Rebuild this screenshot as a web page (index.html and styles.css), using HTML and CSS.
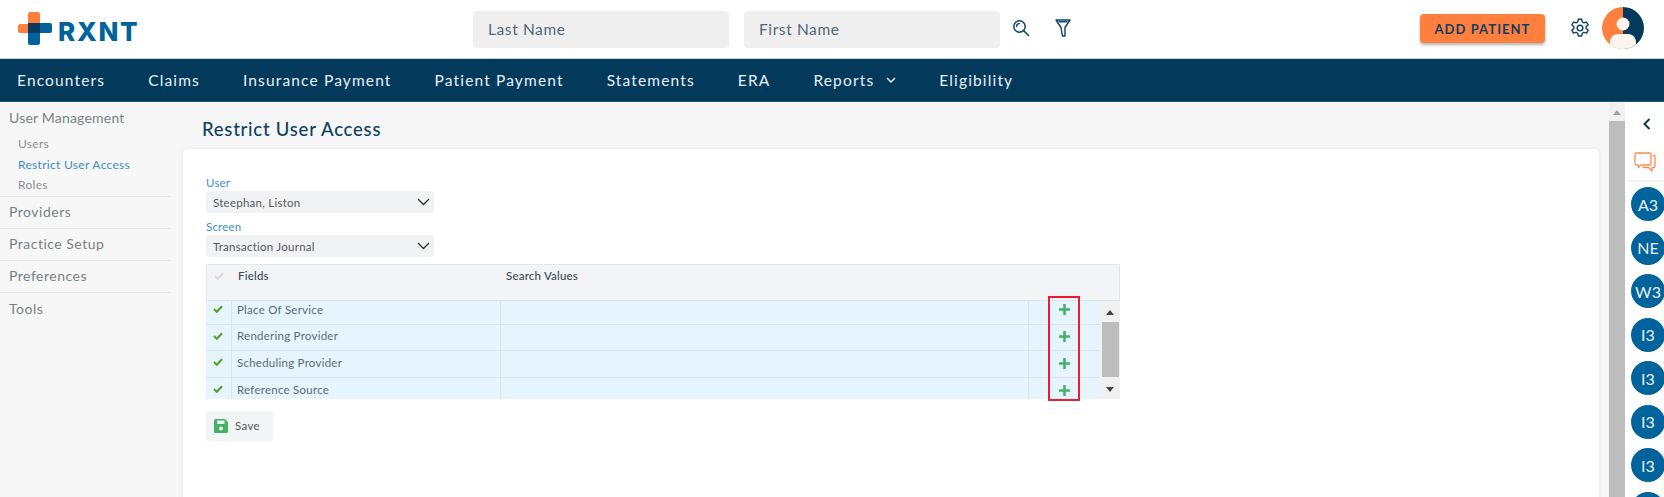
FILE: index.html
```html
<!DOCTYPE html>
<html lang="en">
<head>
<meta charset="utf-8">
<title>Restrict User Access</title>
<link rel="stylesheet" href="styles.css">
</head>
<body>
<header class="top">
  <div class="logo">
    <svg class="logo-mark" width="34" height="33" viewBox="0 0 34 33">
      <path fill="#ff7f3f" d="M10 2a2 2 0 0 1 2-2h8a2 2 0 0 1 2 2v19H2a2 2 0 0 1-2-2v-5a2 2 0 0 1 2-2h8z"/>
      <path fill="#00639c" d="M10 11h22a2 2 0 0 1 2 2v6a2 2 0 0 1-2 2H22v10a2 2 0 0 1-2 2h-8a2 2 0 0 1-2-2z"/>
      <rect x="10" y="11" width="12" height="10" fill="#0b3a5e"/>
    </svg>
    <span class="logo-text">RXNT</span>
  </div>
  <div class="search">
    <div class="field">Last Name</div>
    <div class="field">First Name</div>
    <svg class="search-icon" width="18" height="18" viewBox="0 0 18 18" fill="none" stroke="#0a4468" stroke-width="1.5"><circle cx="7.5" cy="7.5" r="5.7"/><path d="M11.6 11.6 16.500 16.500M4.600 7.200a3 3 0 0 1 2.600-2.600" stroke-linecap="round"/></svg>
    <svg class="filter-icon" width="16" height="18" viewBox="0 0 16 18" fill="none" stroke="#0a4468" stroke-width="1.4" stroke-linejoin="round"><path d="M1 1h14L10 8.500V17H7.500L6 8.500z"/><path d="M3.500 2.800h9"/></svg>
  </div>
  <div class="top-right">
    <button class="add">ADD PATIENT</button>
    <svg class="gear" width="20" height="22" viewBox="0 0 24 24" fill="none" stroke="#0a4468" stroke-width="1.7" stroke-linejoin="round"><circle cx="12" cy="12" r="3.400"/><path d="M10 1.500h4l.7 3.200 2 1.100 3.100-1 2 3.400-2.400 2.200v2.200l2.400 2.200-2 3.400-3.100-1-2 1.100-.7 3.200h-4l-.7-3.200-2-1.100-3.100 1-2-3.400 2.400-2.200v-2.200L2.200 8.200l2-3.400 3.100 1 2-1.100z"/></svg>
    <div class="avatar">
      <svg width="42" height="42" viewBox="0 0 42 42">
        <defs><clipPath id="av"><circle cx="21" cy="21" r="21"/></clipPath></defs>
        <g clip-path="url(#av)">
          <rect width="21" height="42" fill="#ff7f3f"/>
          <rect x="21" width="21" height="42" fill="#033a5c"/>
          <circle cx="21" cy="17" r="6.500" fill="#fbf4ef"/>
          <rect x="8" y="27" width="26" height="20" rx="8" fill="#fbf4ef"/>
        </g>
      </svg>
    </div>
  </div>
</header>
<nav class="nav">
  <a class="nav-item first">Encounters</a>
  <a class="nav-item">Claims</a>
  <a class="nav-item">Insurance Payment</a>
  <a class="nav-item">Patient Payment</a>
  <a class="nav-item">Statements</a>
  <a class="nav-item">ERA</a>
  <a class="nav-item">Reports<svg class="caret" width="10" height="7" viewBox="0 0 10 7" fill="none" stroke="#e8f0f5" stroke-width="1.500"><path d="M1 1l4 4 4-4"/></svg></a>
  <a class="nav-item">Eligibility</a>
</nav>
<div class="body">
  <aside class="side">
    <div class="side-group open">
      <div class="side-head">User Management</div>
      <div class="side-link">Users</div>
      <div class="side-link active">Restrict User Access</div>
      <div class="side-link">Roles</div>
    </div>
    <div class="side-group"><div class="side-head">Providers</div></div>
    <div class="side-group"><div class="side-head">Practice Setup</div></div>
    <div class="side-group"><div class="side-head">Preferences</div></div>
    <div class="side-group last"><div class="side-head">Tools</div></div>
  </aside>
  <main class="main">
    <h1 class="title">Restrict User Access</h1>
    <section class="card">
      <label class="lab">User</label>
      <div class="select"><span>Steephan, Liston</span><svg width="13" height="8" viewBox="0 0 13 8" fill="none" stroke="#333" stroke-width="1.300"><path d="M1 1l5.500 5.500L12 1"/></svg></div>
      <label class="lab second">Screen</label>
      <div class="select"><span>Transaction Journal</span><svg width="13" height="8" viewBox="0 0 13 8" fill="none" stroke="#333" stroke-width="1.300"><path d="M1 1l5.500 5.500L12 1"/></svg></div>
      <div class="grid">
        <div class="grid-head">
          <div class="c-check"><svg class="tick" width="10" height="8" viewBox="0 0 12 10" fill="none" stroke="#d3dbde" stroke-width="2.600"><path d="M1 5l3.500 3.500L11 1.500"/></svg></div>
          <div class="c-field strong">Fields</div>
          <div class="c-search strong">Search Values</div>
        </div>
        <div class="grid-body">
          <div class="rows">
            <div class="row r1">
              <div class="c-check"><svg class="tick" width="10" height="8" viewBox="0 0 12 10" fill="none" stroke="#5c9e2e" stroke-width="2.600"><path d="M1 5l3.500 3.500L11 1.500"/></svg></div>
              <div class="c-field">Place Of Service</div><div class="c-search"></div>
              <div class="c-plus"><svg class="plus" width="11" height="11" viewBox="0 0 12 12"><path fill="#46b067" d="M4.600 0h2.800v4.600H12v2.800H7.400V12H4.600V7.400H0V4.600h4.600z"/></svg></div>
            </div>
            <div class="row r2">
              <div class="c-check"><svg class="tick" width="10" height="8" viewBox="0 0 12 10" fill="none" stroke="#5c9e2e" stroke-width="2.600"><path d="M1 5l3.500 3.500L11 1.500"/></svg></div>
              <div class="c-field">Rendering Provider</div><div class="c-search"></div>
              <div class="c-plus"><svg class="plus" width="11" height="11" viewBox="0 0 12 12"><path fill="#46b067" d="M4.600 0h2.800v4.600H12v2.800H7.400V12H4.600V7.400H0V4.600h4.600z"/></svg></div>
            </div>
            <div class="row r3">
              <div class="c-check"><svg class="tick" width="10" height="8" viewBox="0 0 12 10" fill="none" stroke="#5c9e2e" stroke-width="2.600"><path d="M1 5l3.500 3.500L11 1.500"/></svg></div>
              <div class="c-field">Scheduling Provider</div><div class="c-search"></div>
              <div class="c-plus"><svg class="plus" width="11" height="11" viewBox="0 0 12 12"><path fill="#46b067" d="M4.600 0h2.800v4.600H12v2.800H7.400V12H4.600V7.400H0V4.600h4.600z"/></svg></div>
            </div>
            <div class="row r4">
              <div class="c-check"><svg class="tick" width="10" height="8" viewBox="0 0 12 10" fill="none" stroke="#5c9e2e" stroke-width="2.600"><path d="M1 5l3.500 3.500L11 1.500"/></svg></div>
              <div class="c-field">Reference Source</div><div class="c-search"></div>
              <div class="c-plus"><svg class="plus" width="11" height="11" viewBox="0 0 12 12"><path fill="#46b067" d="M4.600 0h2.800v4.600H12v2.800H7.400V12H4.600V7.400H0V4.600h4.600z"/></svg></div>
            </div>
          </div>
          <div class="mini-scroll">
            <span class="arr up"></span>
            <span class="mini-thumb"></span>
            <span class="arr down"></span>
          </div>
          <div class="redbox"></div>
        </div>
      </div>
      <button class="save">
        <svg width="14" height="14" viewBox="0 0 14 14"><path fill="#46b067" d="M1.500 0H11l3 3v9.500a1.500 1.500 0 0 1-1.500 1.500h-11A1.500 1.500 0 0 1 0 12.500v-11A1.500 1.500 0 0 1 1.500 0z"/><rect x="3" y="1.500" width="7.500" height="3.500" fill="#e8f5ec"/><circle cx="7" cy="9.500" r="2" fill="#e8f5ec"/></svg>
        Save
      </button>
    </section>
  </main>
  <div class="scroll">
    <span class="scroll-up"></span>
    <span class="scroll-thumb"></span>
  </div>
  <aside class="rail">
    <svg class="rail-back" width="8" height="12" viewBox="0 0 8 12" fill="none" stroke="#123f3c" stroke-width="2"><path d="M6.500 1 1.500 6l5 5"/></svg>
    <svg class="rail-chat" width="22" height="20" viewBox="0 0 22 20" fill="none" stroke="#ff8a50" stroke-width="1.300" stroke-linejoin="round"><path d="M2.500 1h13A1.500 1.500 0 0 1 17 2.500v9a1.500 1.500 0 0 1-1.500 1.500H7l-2.500 2.500V13h-2A1.500 1.500 0 0 1 1 11.500v-9A1.500 1.500 0 0 1 2.500 1z"/><path d="M18.500 3.500H20a1 1 0 0 1 1 1V14a1.500 1.500 0 0 1-1.500 1.500H18V19l-3.500-3.500H8.500"/></svg>
    <div class="rail-list">
      <div class="bubble">A3</div>
      <div class="bubble">NE</div>
      <div class="bubble">W3</div>
      <div class="bubble">I3</div>
      <div class="bubble">I3</div>
      <div class="bubble">I3</div>
      <div class="bubble">I3</div>
      <div class="bubble"></div>
    </div>
  </aside>
</div>
</body>
</html>
```
FILE: styles.css
```css
* { box-sizing: border-box; }
html, body { margin: 0; height: 100%; }
body {
  width: 1664px;
  height: 497px;
  overflow: hidden;
  font-family: "Lato", "Open Sans", sans-serif;
  background: #fff;
  display: flex;
  flex-direction: column;
}
.top {
  height: 59px;
  flex: none;
  display: flex;
  align-items: center;
  position: relative;
  border-bottom: 1px solid #c9d3da;
}
.logo { display: flex; align-items: center; width: 473px; padding-left: 18px; gap: 6px; }
.logo-mark { margin-top: -1px; }
.logo-text { font-family: "Inter", sans-serif; font-weight: 800; font-size: 26px; color: #00639c; line-height: 1; margin-top: 6px; letter-spacing: 1.700px; }
.search { display: flex; align-items: center; }
.field {
  width: 256px; height: 37px; margin-right: 15px;
  background: #efefef; border-radius: 4px;
  padding-left: 15px; line-height: 37px;
  font-size: 15.500px; letter-spacing: .6px; color: #54677a;
}
.search-icon { margin-left: -3px; margin-top: -3px; }
.filter-icon { margin-left: 25px; margin-top: -3px; }
.top-right { margin-left: auto; display: flex; align-items: center; padding-right: 20px; }
.add {
  width: 125px; height: 29px; border: 0; border-radius: 4px;
  background: #ff7f3f; color: #123f63;
  font: 700 13px "Lato", sans-serif; letter-spacing: 1.050px;
  box-shadow: 0 2px 3px rgba(0,0,0,.3);
  margin-right: 25px; margin-top: -1px;
}
.gear { margin-right: 12px; margin-top: -3px; }
.avatar { width: 42px; height: 42px; margin-top: -3px; }
.avatar svg { display: block; }
.nav {
  height: 43px; flex: none;
  background: #033a5c;
  display: flex; align-items: center;
  padding-left: 17px; gap: 43px;
  border-bottom: 1px solid #1f5a78;
}
.nav-item { color: #e8f0f5; font-size: 15.500px; letter-spacing: 1.150px; display: flex; align-items: center; }
.caret { margin-left: 12px; }
.body { flex: 1; display: flex; min-height: 0; }
.side {
  width: 183px; flex: none; background: #f7f7f7;
  padding-right: 13px;
}
.side-group { border-bottom: 1px solid #e6e6e6; height: 32px; padding-left: 9px; }
.side-group.open { height: 95px; }
.side-group.last { border: 0; }
.side-head { font-size: 14px; letter-spacing: .5px; color: #7a7f84; line-height: 30px; }
.last .side-head { line-height: 32px; }
.open .side-head { line-height: 20px; padding-top: 6px; height: 32px; letter-spacing: .2px; }
.side-link { font-size: 12px; letter-spacing: .3px; color: #8b8f93; line-height: 20.700px; padding-left: 9px; }
.side-link.active { color: #3d8ec9; }
.main { flex: 1; min-width: 0; background: #f7f7f7; padding-right: 10px; }
.title { margin: 0; padding: 17px 0 0 19px; height: 47px; font-size: 18.500px; line-height: 20px; font-weight: 500; color: #0e3f60; letter-spacing: .75px; }
.card {
  background: #fff; border-radius: 4px 4px 0 0;
  box-shadow: 0 0 4px rgba(0,0,0,.08);
  height: 360px; padding: 26px 0 0 23px;
}
.lab { display: block; font-size: 11.500px; line-height: 16px; color: #3d8ec9; letter-spacing: .2px; }
.lab.second { margin-top: 6px; }
.select {
  width: 228px; height: 22px; background: #f1f2f4; border-radius: 4px;
  display: flex; align-items: center; justify-content: space-between;
  padding: 0 4px 0 7px; font-size: 11.500px; color: #54595e; letter-spacing: .25px;
}
.grid { width: 914px; margin-top: 7px; }
.grid-head {
  height: 37px; background: #f2f4f5;
  border: 1px solid #e4e8ea; border-bottom: 1px solid #dde3e6;
  display: flex; font-size: 11.500px; color: #445; letter-spacing: .2px;
}
.grid-head .c-check { width: 26px; padding: 7px 2px 0 0; }
.grid-head .c-field { width: 269px; padding: 4px 0 0 5px; line-height: 14px; color: #3a4a55; font-weight: 500; }
.grid-head .c-search { padding: 4px 0 0 4px; line-height: 14px; color: #3a4a55; font-weight: 500; }
.grid-head .tick { display: block; }
.grid-body { display: flex; position: relative; }
.rows { width: 894px; height: 98px; overflow: hidden; }
.row { display: flex; background: #e5f4fd; border-bottom: 1px solid #d9e4ec; height: 27px; font-size: 11.500px; color: #5e6a75; letter-spacing: .25px; }
.row.r1 { height: 24px; }
.row.r2 { height: 26px; }
.row.r4 { border-bottom: 0; }
.row > div { border-right: 1px solid #d9e4ec; height: 100%; }
.c-check { width: 26px; flex: none; display: flex; justify-content: center; padding: 4px 1px 0 0; }
.row .c-field { width: 269px; flex: none; padding: 5px 0 0 5px; line-height: 14px; }
.row .c-search { width: 528px; flex: none; }
.row .c-plus { flex: 1; border-right: 0; display: flex; justify-content: center; padding: 7px 0 0 0; }
.row.r1 .c-field { padding-top: 2px; }
.row.r1 .c-plus { padding-top: 3px; }
.row.r2 .c-field { padding-top: 4px; }
.row.r2 .c-plus { padding-top: 6px; }
.row.r2 .c-check, .row.r3 .c-check, .row.r4 .c-check { padding-top: 7px; }
.row .tick { display: block; }
.mini-scroll { flex: 1; background: #f1f1f1; display: flex; flex-direction: column; align-items: center; justify-content: space-between; padding: 9px 0 7px; position: relative; height: 98px; }
.mini-thumb { position: absolute; top: 21px; left: 2px; right: 1px; height: 55px; background: #bdbdbd; }
.arr { width: 0; height: 0; border: 4.500px solid transparent; }
.arr.up { border-bottom: 5px solid #444; border-top: 0; }
.arr.down { border-top: 5px solid #444; border-bottom: 0; }
.redbox { position: absolute; left: 842px; top: -5px; width: 32px; height: 105px; border: 2px solid #ea1c2d; }
.save {
  margin-top: 12px; width: 67px; height: 29px; border: 0; border-radius: 3px;
  background: #f2f5f6; box-shadow: 0 1px 2px rgba(0,0,0,.06);
  display: flex; align-items: center; gap: 7px; padding: 0 0 0 8px;
  font: 11.500px "Lato", sans-serif; color: #555; letter-spacing: .35px;
}
.scroll { width: 16px; flex: none; background: #f1f1f1; position: relative; display: flex; flex-direction: column; align-items: center; }
.scroll-up { width: 0; height: 0; margin-top: 8px; border: 4.500px solid transparent; border-top: 0; border-bottom: 5px solid #a3a3a3; }
.scroll-thumb { position: absolute; top: 19px; bottom: 0; left: 0; right: 0; background: #bdbdbd; }
.rail { width: 39px; flex: none; display: flex; flex-direction: column; padding-left: 2px; overflow: hidden; }
.rail-back { margin: 16px 0 0 16px; flex: none; }
.rail-chat { margin: 22px 0 0 7px; flex: none; }
.rail-list { margin-top: 8px; padding: 5px 0 0 4px; border-top: 2px solid #f2f2f2; display: flex; flex-direction: column; gap: 9.500px; width: 60px; }
.bubble { width: 34px; height: 34px; flex: none; border-radius: 50%; background: #00639c; color: #e8f0f5; font-size: 16px; display: flex; align-items: center; justify-content: center; }
```
